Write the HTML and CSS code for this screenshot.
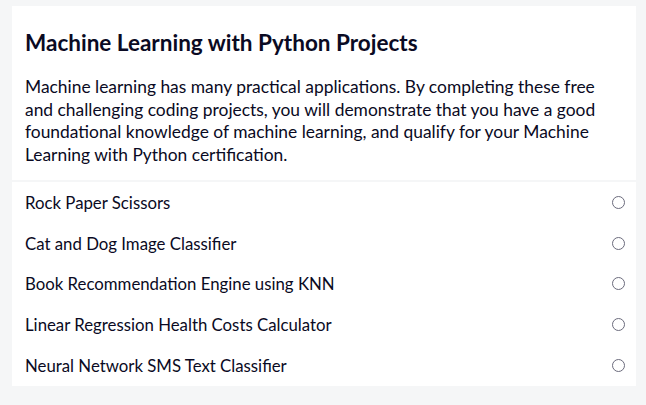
FILE: index.html
```html
<!DOCTYPE html>
<html lang="en">
<head>
    <meta charset="UTF-8">
    <meta name="viewport" content="width=device-width, initial-scale=1.0">
    <title>Machine Learning with Python Projects</title>
    <link rel="stylesheet" href="styles.css">
</head>
<body>
    <div class="block">
        <div class="block-header">
            <h2>Machine Learning with Python Projects</h2>
            <p>Machine learning has many practical applications. By completing these free and challenging coding projects, you will demonstrate that you have a good foundational knowledge of machine learning, and qualify for your Machine Learning with Python certification.</p>
        </div>
        <ul class="project-list">
            <li class="project">
                <span>Rock Paper Scissors</span>
                <span class="check"></span>
            </li>
            <li class="project">
                <span>Cat and Dog Image Classifier</span>
                <span class="check"></span>
            </li>
            <li class="project">
                <span>Book Recommendation Engine using KNN</span>
                <span class="check"></span>
            </li>
            <li class="project">
                <span>Linear Regression Health Costs Calculator</span>
                <span class="check"></span>
            </li>
            <li class="project">
                <span>Neural Network SMS Text Classifier</span>
                <span class="check"></span>
            </li>
        </ul>
    </div>
</body>
</html>
```

FILE: styles.css
```css
body {
    font-family: Lato, "Noto Sans", sans-serif;
    margin: 0;
    padding: 6px 10px 0 12px;
    color: #0a0a23;
    background-color: #f5f6f7;
}
.block {
    background-color: #ffffff;
}
.block-header {
    padding: 23px 26px 14px 13px;
    border-bottom: 2px solid #f5f6f7;
}
h2 {
    font-size: 22.5px;
    font-weight: 700;
    line-height: 28px;
    margin: 0 0 19px;
}
p {
    font-size: 17.4px;
    line-height: 22.5px;
    margin: 0;
}
.project-list {
    list-style: none;
    margin: 0;
    padding: 0;
}
.project {
    display: flex;
    justify-content: space-between;
    align-items: center;
    height: 40.8px;
    padding: 0 11px 0 13px;
    font-size: 16.8px;
}
.check {
    width: 11px;
    height: 11px;
    border: 1px solid #6b6b7c;
    border-radius: 50%;
}
```
